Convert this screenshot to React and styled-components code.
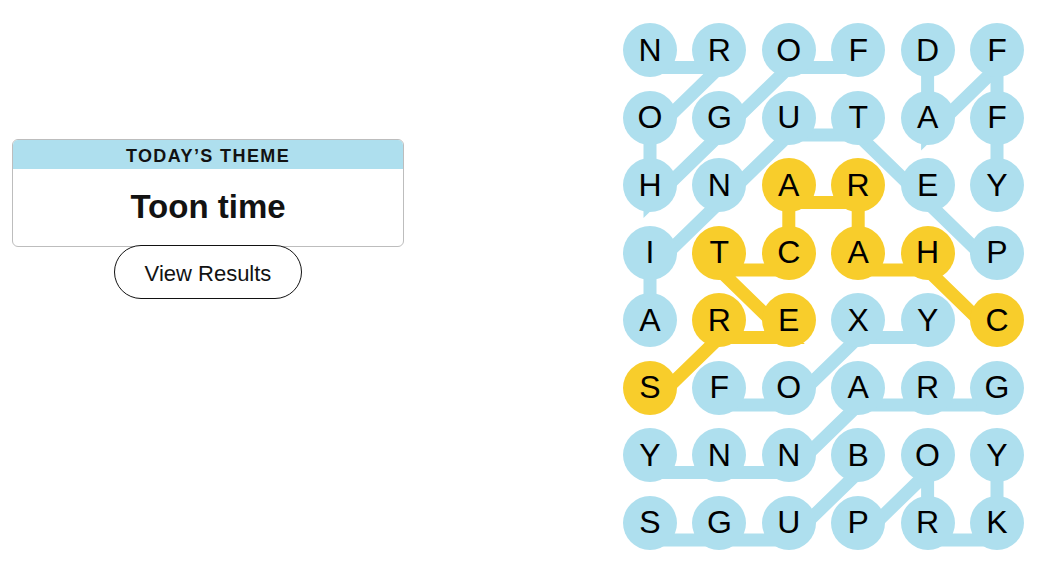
import React from 'react';
import styled, { createGlobalStyle } from 'styled-components';

const GlobalStyle = createGlobalStyle`
  body {
    margin: 0;
    background: #fff;
    font-family: 'Liberation Sans', Arial, sans-serif;
    color: #121212;
  }
`;

const BLUE = '#aedfee';
const YELLOW = '#f8cd2b';

// board geometry
const CELL = 54;
const PITCH_X = 69.4;
const PITCH_Y = 67.5;
const LINE_DROP = 17.5;

const GRID = ['NROFDF', 'OGUTAF', 'HNAREY', 'ITCAHP', 'AREXYC', 'SFOARG', 'YNNBOY', 'SGUPRK'];

const WORDS = [
  { color: YELLOW, cells: [[4, 5], [3, 4], [3, 3], [2, 3], [2, 2], [3, 2], [3, 1], [4, 2], [4, 1], [5, 0]] },
  { color: BLUE, cells: [[0, 3], [0, 2], [1, 1], [2, 0], [1, 0], [0, 1], [0, 0]] },
  { color: BLUE, cells: [[0, 4], [1, 4], [0, 5], [1, 5], [2, 5]] },
  { color: BLUE, cells: [[3, 5], [2, 4], [1, 3], [1, 2], [2, 1], [3, 0], [4, 0]] },
  { color: BLUE, cells: [[5, 5], [5, 4], [5, 3], [6, 2], [6, 1], [6, 0]] },
  { color: BLUE, cells: [[5, 1], [5, 2], [4, 3], [4, 4]] },
  { color: BLUE, cells: [[6, 3], [7, 2], [7, 1], [7, 0]] },
  { color: BLUE, cells: [[7, 3], [6, 4], [7, 4], [7, 5], [6, 5]] },
];

const colorAt = {};
WORDS.forEach(w => w.cells.forEach(([r, c]) => { colorAt[`${r}-${c}`] = w.color; }));

const BOARD_W = PITCH_X * 5 + CELL;
const BOARD_H = PITCH_Y * 7 + CELL;

const Page = styled.main`
  display: flex;
  align-items: flex-start;
`;

const Side = styled.section`
  width: 392px;
  padding: 139px 0 0 12px;
  display: flex;
  flex-direction: column;
  align-items: center;
`;

const ThemeCard = styled.div`
  width: 100%;
  box-sizing: border-box;
  border: 1px solid #bdbdbd;
  border-radius: 6px;
  overflow: hidden;
  text-align: center;
`;

const ThemeLabel = styled.h2`
  margin: 0;
  height: 29px;
  box-sizing: border-box;
  padding-top: 4px;
  background: ${BLUE};
  font-size: 18px;
  line-height: 25px;
  font-weight: 700;
  letter-spacing: 1.4px;
  text-transform: uppercase;
  color: #121212;
`;

const ThemeName = styled.h1`
  margin: 0;
  padding: 18px 0 19px;
  font-size: 33px;
  line-height: 40px;
  font-weight: 700;
  color: #121212;
`;

const ResultsButton = styled.button`
  position: relative;
  margin-top: -2px;
  width: 188px;
  height: 54px;
  padding: 3px 0 0;
  border: 1px solid #121212;
  border-radius: 27px;
  background: #fff;
  font-family: 'Liberation Sans', Arial, sans-serif;
  font-size: 22px;
  color: #121212;
  cursor: pointer;
`;

const Board = styled.div`
  position: relative;
  margin: 23px 0 0 219px;
  display: grid;
  grid-template-columns: repeat(6, ${CELL}px);
  grid-auto-rows: ${CELL}px;
  column-gap: ${PITCH_X - CELL}px;
  row-gap: ${PITCH_Y - CELL}px;
`;

const Links = styled.svg`
  position: absolute;
  left: 0;
  top: 0;
  overflow: visible;
`;

const Letter = styled.div`
  position: relative;
  z-index: 1;
  width: ${CELL}px;
  height: ${CELL}px;
  border-radius: 50%;
  background: ${p => p.$color || 'transparent'};
  display: flex;
  align-items: center;
  justify-content: center;
  font-size: 32px;
  color: #000;
`;

const point = ([r, c]) => `${CELL / 2 + c * PITCH_X},${CELL / 2 + r * PITCH_Y + LINE_DROP}`;

export default function App() {
  return (
    <>
      <GlobalStyle />
      <Page>
        <Side>
          <ThemeCard>
            <ThemeLabel>Today’s Theme</ThemeLabel>
            <ThemeName>Toon time</ThemeName>
          </ThemeCard>
          <ResultsButton>View Results</ResultsButton>
        </Side>
        <Board>
          <Links width={BOARD_W} height={BOARD_H}>
            {WORDS.map((w, i) => (
              <polyline
                key={i}
                points={w.cells.map(point).join(' ')}
                fill="none"
                stroke={w.color}
                strokeWidth="13"
                strokeLinejoin="miter"
              />
            ))}
          </Links>
          {GRID.map((row, r) =>
            row.split('').map((ch, c) => (
              <Letter key={`${r}-${c}`} $color={colorAt[`${r}-${c}`]}>{ch}</Letter>
            ))
          )}
        </Board>
      </Page>
    </>
  );
}
